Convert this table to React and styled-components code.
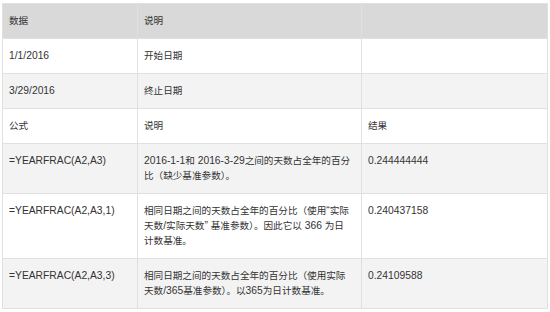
import React from "react";
import styled, { createGlobalStyle } from "styled-components";

const Global = createGlobalStyle`
  html, body { margin: 0; padding: 0; background: #ffffff; }
  body { font-family: "Liberation Sans", "Noto Sans CJK SC", sans-serif; }
`;

const Page = styled.div`
  width: 550px;
  height: 312px;
  padding: 3px 0 0 2px;
  box-sizing: border-box;
  background: #ffffff;
  overflow: hidden;
`;

const Table = styled.table`
  border-collapse: collapse;
  table-layout: fixed;
  width: 545px;
  border: 1px solid #e0e0e0;
`;

const Col = styled.col`
  width: ${(p) => p.$w}px;
`;

const Row = styled.tr`
  background: ${(p) => (p.$head ? "#d9d9d9" : p.$shade ? "#f3f3f3" : "#ffffff")};
`;

const Cell = styled.td`
  padding: 9px 6px 10px 6px;
  border: 1px solid #e0e0e0;
  vertical-align: top;
  font-size: 10.3px;
  line-height: 15px;
  color: #333333;
  white-space: nowrap;
  overflow: hidden;
`;

const Han = styled.span`
  font-family: "Noto Sans CJK SC", sans-serif;
  font-size: 9.6px;
`;

const rows = [
  { head: true, cells: ["数据", "说明", ""] },
  { cells: ["1/1/2016", "开始日期", ""] },
  { shade: true, cells: ["3/29/2016", "终止日期", ""] },
  { cells: ["公式", "说明", "结果"] },
  {
    shade: true,
    cells: [
      "=YEARFRAC(A2,A3)",
      ["2016-1-1和 2016-3-29之间的天数占全年的百分", "比（缺少基准参数）。"],
      "0.244444444",
    ],
  },
  {
    cells: [
      "=YEARFRAC(A2,A3,1)",
      [
        "相同日期之间的天数占全年的百分比（使用\u201c实际",
        "天数/实际天数\u201d 基准参数）。因此它以 366 为日",
        "计数基准。",
      ],
      "0.240437158",
    ],
  },
  {
    shade: true,
    cells: [
      "=YEARFRAC(A2,A3,3)",
      ["相同日期之间的天数占全年的百分比（使用实际", "天数/365基准参数）。以365为日计数基准。"],
      "0.24109588",
    ],
  },
];

const HAN_RUN = /([\u3000-\u303f\u4e00-\u9fff\uff00-\uffef]+)/;

function Text({ value }) {
  return value.split(HAN_RUN).map((part, i) =>
    i % 2 === 1 ? <Han key={i}>{part}</Han> : part
  );
}

function Lines({ value }) {
  const list = Array.isArray(value) ? value : [value];
  return list.map((line, i) => (
    <React.Fragment key={i}>
      {i > 0 && <br />}
      <Text value={line} />
    </React.Fragment>
  ));
}

export default function App() {
  return (
    <Page>
      <Global />
      <Table>
        <colgroup>
          <Col $w={135} />
          <Col $w={224} />
          <Col $w={186} />
        </colgroup>
        <tbody>
          {rows.map((r, i) => (
            <Row key={i} $head={r.head} $shade={r.shade}>
              {r.cells.map((c, j) => (
                <Cell key={j}>
                  <Lines value={c} />
                </Cell>
              ))}
            </Row>
          ))}
        </tbody>
      </Table>
    </Page>
  );
}
